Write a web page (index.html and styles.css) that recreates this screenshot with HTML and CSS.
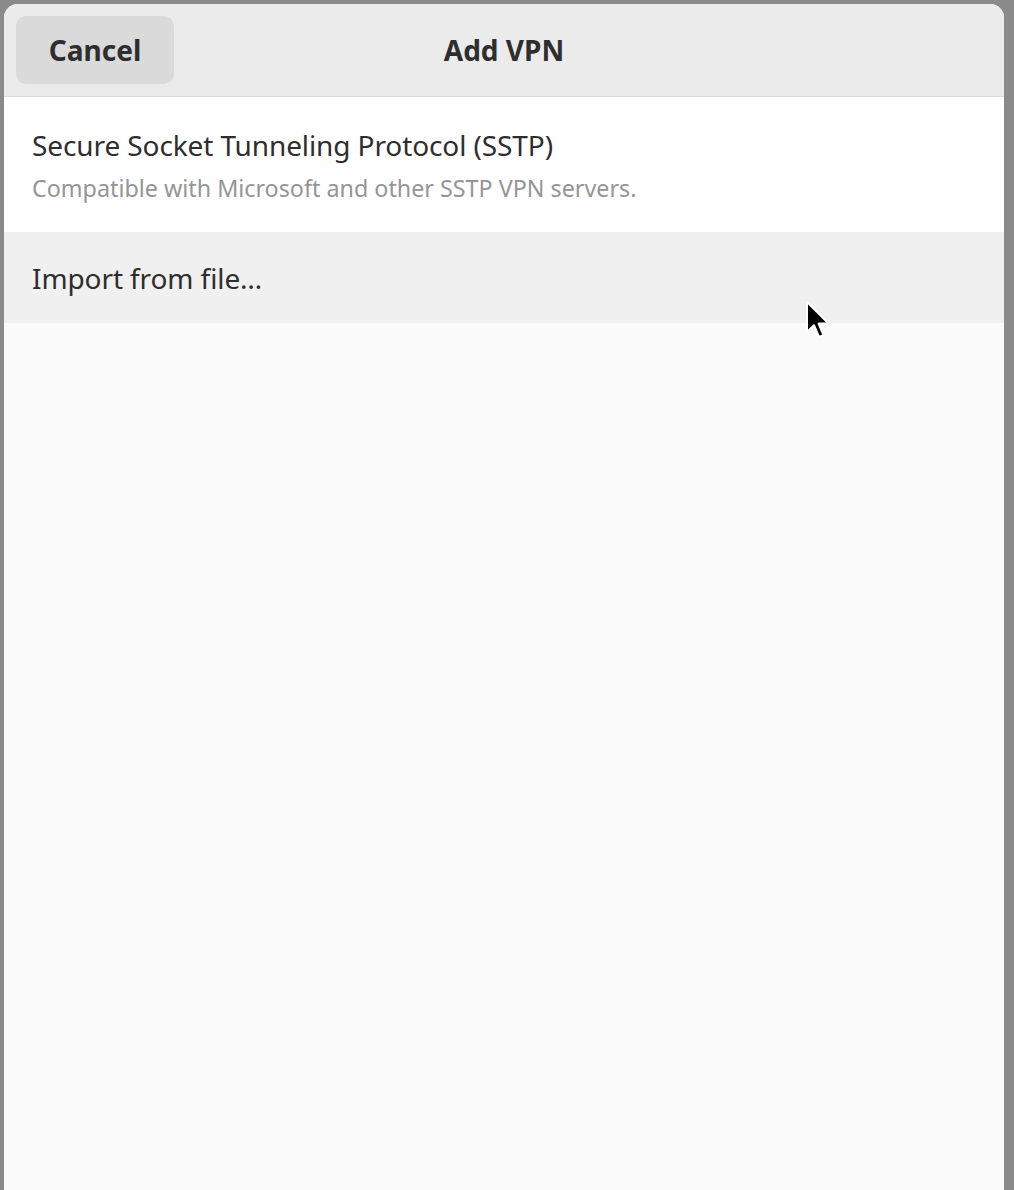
FILE: index.html
```html
<!DOCTYPE html>
<html lang="en">
<head>
  <meta charset="UTF-8">
  <title>Add VPN</title>
  <link rel="stylesheet" href="styles.css">
</head>
<body>
  <div class="backdrop">
    <div class="dialog">
      <div class="headerbar">
        <button class="cancel">Cancel</button>
        <h2 class="title">Add VPN</h2>
        <div class="spacer"></div>
      </div>

      <div class="list">
        <div class="row">
          <div class="row-title">Secure Socket Tunneling Protocol (SSTP)</div>
          <div class="row-subtitle">Compatible with Microsoft and other SSTP VPN servers.</div>
        </div>
        <div class="row import hover">
          <div class="row-title">Import from file…</div>
          <svg class="cursor" width="28" height="42" viewBox="0 0 14 21">
            <path d="M1 1 L1 16 L4.5 12.6 L7 18.5 L9.2 17.6 L6.8 11.8 L11.8 11.8 Z" fill="#000" stroke="#fff" stroke-width="1" stroke-linejoin="round"/>
          </svg>
        </div>
      </div>
      <div class="empty"></div>
    </div>
  </div>
</body>
</html>
```

FILE: styles.css
```css
html, body {
  margin: 0;
  height: 100%;
}

body {
  font-family: "Noto Sans", "Open Sans", sans-serif;
  background: #8a8a8a;
  overflow: hidden;
}

.backdrop {
  padding: 4px 10px 0 4px;
  height: 100%;
  box-sizing: border-box;
}

.dialog {
  background: #fafafa;
  border-radius: 14px 14px 0 0;
  height: 100%;
  display: flex;
  flex-direction: column;
  overflow: hidden;
}

.headerbar {
  background: #ebebeb;
  border-bottom: 1px solid #d8d8d8;
  height: 92px;
  display: flex;
  align-items: center;
  padding: 0 12px;
  flex-shrink: 0;
}

.cancel {
  width: 158px;
  height: 68px;
  border: none;
  border-radius: 10px;
  background: #dadada;
  color: #2e2e2e;
  font-family: inherit;
  font-size: 28px;
  font-weight: bold;
}

.title {
  flex: 1;
  text-align: center;
  margin: 0;
  font-size: 28px;
  font-weight: bold;
  color: #2e2e2e;
}

.spacer {
  width: 158px;
}

.row {
  padding: 0 28px;
  display: flex;
  flex-direction: column;
  justify-content: center;
  background: #ffffff;
  height: 135px;
  position: relative;
}

.row.hover {
  background: #f0f0f0;
  height: 91px;
}

.row-title {
  font-size: 28px;
  color: #2e2e2e;
  letter-spacing: -0.1px;
  line-height: 36px;
}

.row-subtitle {
  font-size: 23.3px;
  color: #959595;
  margin-top: 10px;
  line-height: 30px;
}

.cursor {
  position: absolute;
  left: 801px;
  top: 68px;
}

.empty {
  flex: 1;
}
```
